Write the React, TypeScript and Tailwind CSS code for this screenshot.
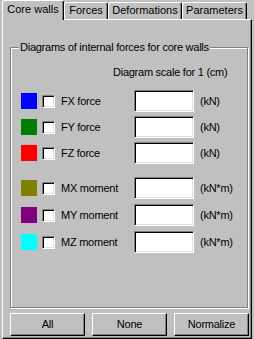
const rows1 = [
  { color: "bg-[#0000ff]", label: "FX force", unit: "(kN)" },
  { color: "bg-[#008000]", label: "FY force", unit: "(kN)" },
  { color: "bg-[#ff0000]", label: "FZ force", unit: "(kN)" },
];

const rows2 = [
  { color: "bg-[#808000]", label: "MX moment", unit: "(kN*m)" },
  { color: "bg-[#800080]", label: "MY moment", unit: "(kN*m)" },
  { color: "bg-[#00ffff]", label: "MZ moment", unit: "(kN*m)" },
];

const sunken =
  "border border-t-[#808080] border-l-[#808080] border-r-white border-b-white shadow-[inset_1px_1px_0_#000,inset_-1px_-1px_0_#dfdfdf] bg-white";

function Row({ color, label, unit }: { color: string; label: string; unit: string }) {
  return (
    <div className="flex h-[22px] items-center">
      <span className={`ml-[10px] h-[16px] w-[16px] shrink-0 ${color}`} />
      <span className={`ml-[5px] h-[13px] w-[13px] shrink-0 ${sunken}`} />
      <span className="ml-[6px] w-[73px] shrink-0">{label}</span>
      <span className={`h-[22px] w-[60px] shrink-0 ${sunken}`} />
      <span className="ml-[6px]">{unit}</span>
    </div>
  );
}

function Tab({ label, active, className }: { label: string; active?: boolean; className: string }) {
  return (
    <div
      className={`flex items-center justify-center rounded-t-[3px] border border-b-0 border-t-white border-l-white border-r-black bg-[#c0c0c0] shadow-[inset_-1px_0_0_#808080] ${
        active ? "relative z-10 -mb-[1px] h-[20px] pb-[2px]" : "h-[17px] pb-[1px]"
      } ${className}`}
    >
      {label}
    </div>
  );
}

function Button({ label }: { label: string }) {
  return (
    <div className="flex h-[23px] w-[75px] items-center justify-center border border-t-white border-l-white border-r-black border-b-black shadow-[inset_-1px_-1px_0_#808080]">
      {label}
    </div>
  );
}

export default function App() {
  return (
    <div
      className="h-[339px] w-[254px] overflow-hidden bg-[#c0c0c0] text-[11px] leading-none tracking-[-0.25px] text-black"
      style={{ fontFamily: '"Liberation Sans", Arial, sans-serif' }}
    >
      <div className="flex h-[19px] items-end tracking-normal">
        <Tab label="Core walls" active className="ml-[2px] w-[62px]" />
        <Tab label="Forces" className="w-[44px]" />
        <Tab label="Deformations" className="w-[74px]" />
        <Tab label="Parameters" className="w-[65px]" />
      </div>
      <div className="ml-[2px] flex h-[320px] w-[250px] flex-col border border-t-white border-l-white border-r-black border-b-black shadow-[inset_-1px_-1px_0_#808080]">
        <div className="relative ml-[7px] mt-[27px] h-[261px] w-[238px] border border-[#808080] shadow-[inset_1px_1px_0_#fff,1px_1px_0_#fff]">
          <span className="absolute -top-[6px] left-[8px] bg-[#c0c0c0] px-[1px]">
            Diagrams of internal forces for core walls
          </span>
          <div className="ml-[102px] mt-[19px]">Diagram scale for 1 (cm)</div>
          <div className="mt-[12px] flex flex-col gap-[4px]">
            {rows1.map((r) => (
              <Row key={r.label} {...r} />
            ))}
          </div>
          <div className="mt-[13px] flex flex-col gap-[5px]">
            {rows2.map((r) => (
              <Row key={r.label} {...r} />
            ))}
          </div>
        </div>
        <div className="ml-[7px] mt-[5px] flex gap-[7px]">
          <Button label="All" />
          <Button label="None" />
          <Button label="Normalize" />
        </div>
      </div>
    </div>
  );
}
